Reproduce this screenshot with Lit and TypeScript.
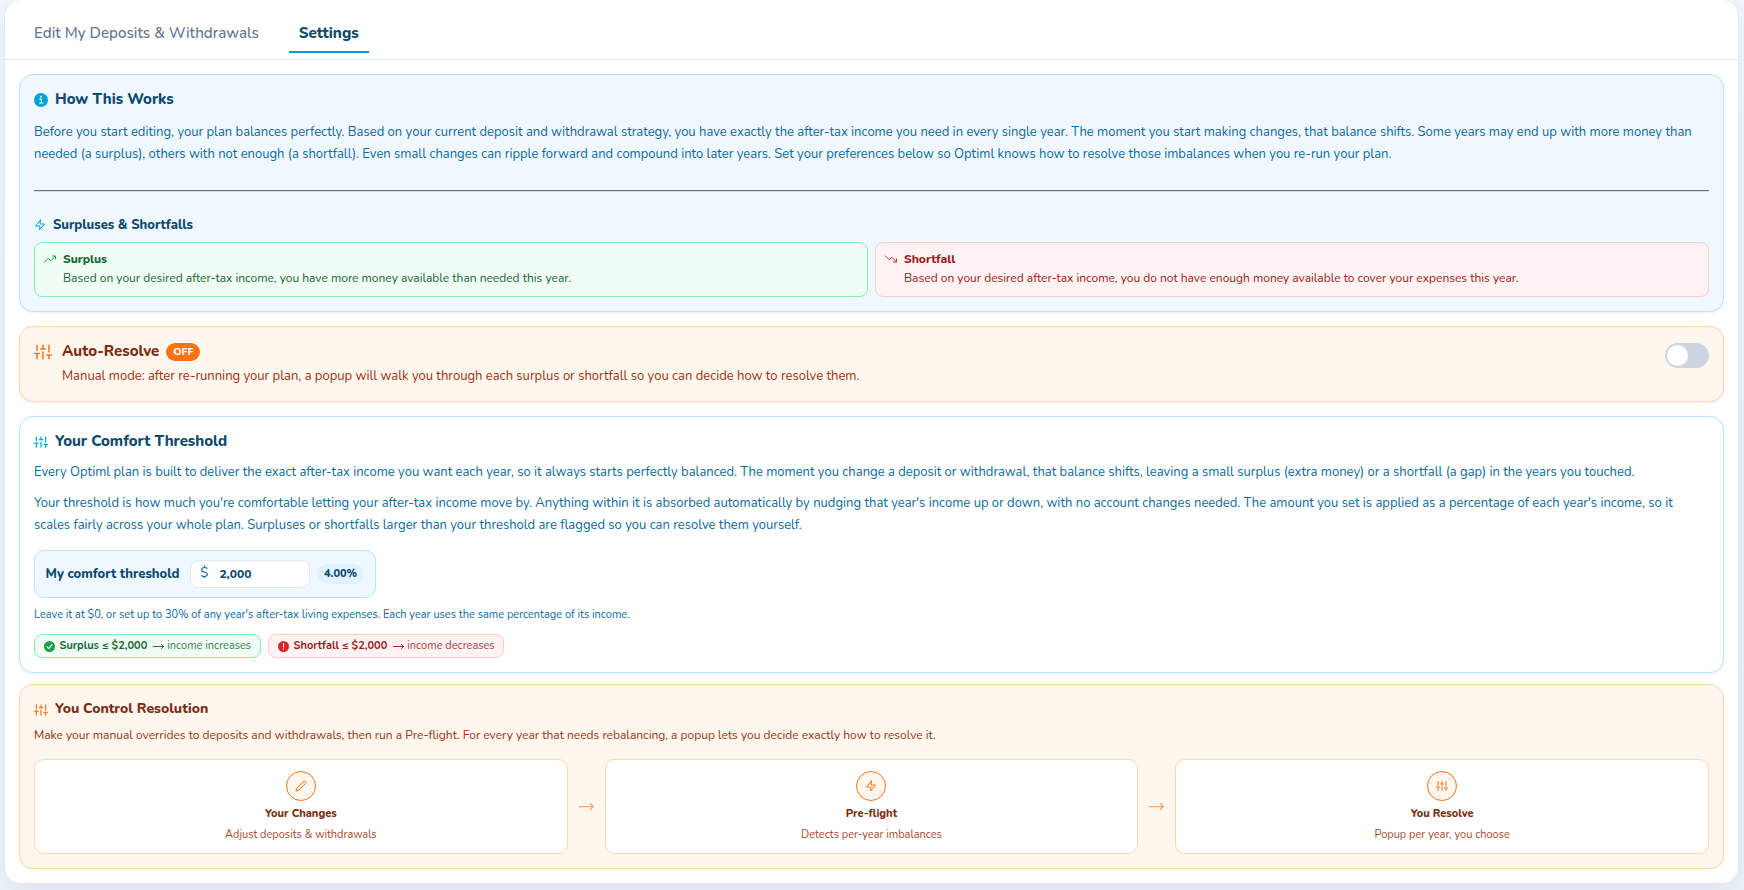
import { LitElement, html, css, svg } from "lit";
import { customElement, property, state } from "lit/decorators.js";

const GLYPHS: Record<string, unknown> = {
  sliders: svg`<path d="M4 21v-7M4 10V3M12 21v-9M12 8V3M20 21v-5M20 12V3M1 14h6M9 8h6M17 16h6" />`,
  zap: svg`<path d="M13 2 3 14h9l-1 8 10-12h-9l1-8z" />`,
  up: svg`<path d="M23 6 13.500 15.500l-5-5L1 18M17 6h6v6" />`,
  down: svg`<path d="M23 18 13.500 8.500l-5 5L1 6M17 18h6v-6" />`,
  pencil: svg`<path d="M17 3a2.830 2.830 0 1 1 4 4L7.500 20.500 2 22l1.500-5.500L17 3z" />`,
  info: svg`<circle cx="12" cy="12" r="12" fill="currentColor" stroke="none" />
    <path d="M10 10.500h2.500v6.500M9.500 17.300h5.500" stroke="#fff" stroke-width="1.800" />
    <circle cx="12" cy="6.300" r="1.500" fill="#fff" stroke="none" />`,
  check: svg`<circle cx="12" cy="12" r="12" fill="currentColor" stroke="none" />
    <path d="M6.500 12.500l4 4 7-8.500" stroke="#fff" stroke-width="2.400" />`,
  alert: svg`<circle cx="12" cy="12" r="12" fill="currentColor" stroke="none" />
    <path d="M12 5.500v7.500M12 16.800v1" stroke="#fff" stroke-width="2.400" />`,
  arrow: svg`<path d="M0.500 12h22.500M18.500 7.500 23 12l-4.500 4.500" />`,
};

@customElement("ui-icon")
class UiIcon extends LitElement {
  @property() name = "zap";
  static styles = css`
    :host { display: block; flex: none; width: 14px; height: 14px; }
    svg { display: block; width: 100%; height: 100%; overflow: visible; }
  `;
  render() {
    return html`<svg viewBox="0 0 24 24" fill="none" stroke="currentColor" stroke-width="2"
      stroke-linecap="round" stroke-linejoin="round">${GLYPHS[this.name]}</svg>`;
  }
}

@customElement("app-root")
class AppRoot extends LitElement {
  @state() private steps = [
    { icon: "pencil", title: "Your Changes", note: "Adjust deposits & withdrawals" },
    { icon: "zap", title: "Pre-flight", note: "Detects per-year imbalances" },
    { icon: "sliders", title: "You Resolve", note: "Popup per year, you choose" },
  ];

  static styles = css`
    :host {
      display: block;
      box-sizing: border-box;
      height: 890px;
      padding: 0 5px 7px 4px;
      overflow: hidden;
      background: linear-gradient(180deg, #f1f7fd 0%, #ecf4fb 50%, #edf3fa 100%);
      font-family: Nunito, Lato, "Noto Sans", sans-serif;
      font-size: 13px;
      color: #0c6a9c;
    }
    * { box-sizing: border-box; }
    p, h2, h3 { margin: 0; }
    h2, h3, .strong { font-weight: 800; }
    b { font-weight: 700; }

    .panel {
      height: 883px;
      background: #fff;
      border-radius: 16px;
      box-shadow: inset 1px 0 #e2e8f0, inset -1px 0 #e2e8f0, 0 8px 24px rgba(15, 50, 90, 0.08);
    }
    .tabs {
      display: flex;
      gap: 20px;
      height: 60px;
      padding: 12px 20px 0;
      border-bottom: 1px solid #dfe7f0;
    }
    .tab {
      height: 41px;
      padding: 0 10px;
      border-bottom: 2px solid transparent;
      font-size: 15.200px;
      font-weight: 500;
      line-height: 42px;
      color: #64748b;
      white-space: nowrap;
    }
    .tab.active { border-color: #00a3d7; color: #0c4a6e; font-weight: 800; }
    .body { padding: 14px 15px 0; }

    .card {
      margin-bottom: 14px;
      padding: 14px;
      border: 1px solid #b9e6fb;
      border-radius: 14px;
      background: #fff;
      box-shadow: 0 1px 3px rgba(15, 50, 90, 0.08);
    }
    .card.sky { background: #f0f8ff; height: 238px; }
    .card.auto { height: 76px; display: flex; gap: 10px; }
    .card.threshold { height: 257px; margin-bottom: 11px; }
    .card.orange { background: #fff6ed; border-color: #fed7aa; color: #9a3412; }

    .heading { display: flex; align-items: center; gap: 7px; height: 20px; color: #00a3d7; }
    .heading h2 { font-size: 15px; line-height: 20px; color: #0c4a6e; }
    .heading ui-icon { position: relative; top: 1px; }
    .orange .heading { color: #f97316; }
    .orange .heading h2 { font-size: 14px; color: #7c2d12; }

    .copy { line-height: 22px; }
    .intro { margin-top: 12px; }
    .first { margin-top: 10px; }
    .second { margin-top: 9px; }

    .rule { height: 1px; margin: 25px 0 24px; border: 0; background: #64748b; box-shadow: 0 1px #bae6fd; }
    .sub { display: flex; align-items: center; gap: 7px; height: 20px; color: #00a3d7; }
    .sub ui-icon { width: 12px; height: 12px; }
    .sub h3 { font-size: 13px; line-height: 20px; color: #0c4a6e; }

    .pair { display: grid; grid-template-columns: 1fr 1fr; gap: 7px; margin-top: 7px; }
    .notice {
      display: flex;
      gap: 7px;
      height: 55px;
      padding: 7px 9px;
      border: 1px solid;
      border-radius: 8px;
      font-size: 12px;
      line-height: 18px;
    }
    .notice ui-icon { width: 12px; height: 12px; margin-top: 3px; }
    .notice h3 { font-size: 12px; line-height: 18px; }
    .notice p { margin-top: 1px; }
    .green { background: #f0fdf4; border-color: #86efac; color: #16a34a; }
    .green p, .green span, .green h3, .green b, .green .go { color: #166534; }
    .red { background: #fef2f2; border-color: #fecaca; color: #dc2626; }
    .red p, .red span, .red h3, .red b, .red .go { color: #991b1b; }

    .auto > ui-icon { width: 18px; height: 18px; margin-top: 2px; color: #f97316; }
    .auto .text { flex: 1; }
    .title { display: flex; gap: 7px; height: 20px; }
    .title h2 { font-size: 15px; line-height: 20px; color: #7c2d12; }
    .badge {
      width: 34px;
      height: 18px;
      margin-top: 2px;
      border-radius: 9px;
      background: #f97316;
      color: #fff;
      font-size: 10.500px;
      line-height: 18px;
      text-align: center;
    }
    .auto p { margin-top: 5px; line-height: 20px; }
    .toggle {
      width: 44px;
      height: 25px;
      margin-top: 2px;
      padding: 2px;
      border-radius: 13px;
      background: #cbd5e1;
    }
    .knob { width: 21px; height: 21px; border-radius: 50%; background: #fff; }

    .field {
      display: flex;
      align-items: center;
      width: 342px;
      height: 48px;
      margin-top: 14px;
      padding: 0 11px 0 10.500px;
      border: 1px solid #b9e6fb;
      border-radius: 10px;
      background: #f0f8ff;
      color: #0c4a6e;
    }
    .label { width: 144.500px; white-space: nowrap; }
    .money {
      display: flex;
      gap: 11px;
      width: 120px;
      height: 28px;
      padding-left: 9px;
      border: 1px solid #dfe9f3;
      border-radius: 8px;
      background: #fff;
      line-height: 26px;
    }
    .money i { font-style: normal; font-size: 14px; line-height: 24px; color: #0c6a9c; }
    .money .strong { font-size: 12px; }
    .percent {
      width: 47px;
      height: 20px;
      margin-left: 7px;
      border-radius: 10px;
      background: #e0f2fe;
      font-size: 11px;
      line-height: 19px;
      text-align: center;
    }
    .hint { margin-top: 8px; font-size: 11px; line-height: 18px; }
    .pills { display: flex; gap: 7px; margin-top: 10px; }
    .pill {
      display: flex;
      align-items: center;
      width: 227px;
      height: 24px;
      padding: 0 0 1px 9px;
      border-width: 1px;
      border-style: solid;
      border-radius: 8px;
      font-size: 11px;
      line-height: 20px;
      white-space: nowrap;
    }
    .pill.red { width: 236px; }
    .pill ui-icon { width: 11px; height: 11px; margin: 1px 4.500px 0 0; }
    .pill b { margin-right: 6px; }
    .pill .go { margin-right: 3px; }
    .pill span { opacity: 0.85; }

    .lead { margin-top: 6px; font-size: 12px; line-height: 20px; }
    .flow {
      display: grid;
      grid-template-columns: 1fr 37px 1fr 37px 1fr;
      align-items: center;
      margin-top: 14px;
    }
    .step {
      display: flex;
      flex-direction: column;
      align-items: center;
      height: 95px;
      padding-top: 11px;
      border: 1px solid #fed7aa;
      border-radius: 10px;
      background: #fff;
    }
    .disc {
      display: grid;
      place-items: center;
      width: 30px;
      height: 30px;
      border: 1px solid #f97316;
      border-radius: 50%;
      background: #fff6ed;
      color: #f97316;
    }
    .disc ui-icon { width: 12px; height: 12px; }
    .step h3 { margin-top: 5px; font-size: 11px; line-height: 16px; color: #7c2d12; }
    .step p { margin-top: 5px; font-size: 11px; line-height: 16px; opacity: 0.9; }
    .flow > ui-icon { width: 15px; height: 15px; justify-self: center; color: #fba56c; }
  `;

  private heading(icon: string, text: string) {
    return html`<div class="heading"><ui-icon name=${icon}></ui-icon><h2>${text}</h2></div>`;
  }

  private notice(tone: string, icon: string, title: string, text: string) {
    return html`<div class="notice ${tone}">
      <ui-icon name=${icon}></ui-icon>
      <div><h3>${title}</h3><p>${text}</p></div>
    </div>`;
  }

  private pill(tone: string, icon: string, title: string, text: string) {
    return html`<div class="pill ${tone}">
      <ui-icon name=${icon}></ui-icon><b>${title}</b><ui-icon class="go" name="arrow"></ui-icon><span>${text}</span>
    </div>`;
  }

  render() {
    return html`<main class="panel">
      <nav class="tabs">
        <div class="tab">Edit My Deposits &amp; Withdrawals</div>
        <div class="tab active">Settings</div>
      </nav>
      <div class="body">
        <section class="card sky">
          ${this.heading("info", "How This Works")}
          <p class="copy intro">Before you start editing, your plan balances perfectly. Based on your current deposit and withdrawal strategy, you have exactly the after-tax income you need in every single year. The moment you start making changes, that balance shifts. Some years may end up with more money than needed (a surplus), others with not enough (a shortfall). Even small changes can ripple forward and compound into later years. Set your preferences below so Optiml knows how to resolve those imbalances when you re-run your plan.</p>
          <hr class="rule" />
          <div class="sub"><ui-icon name="zap"></ui-icon><h3>Surpluses &amp; Shortfalls</h3></div>
          <div class="pair">
            ${this.notice("green", "up", "Surplus", "Based on your desired after-tax income, you have more money available than needed this year.")}
            ${this.notice("red", "down", "Shortfall", "Based on your desired after-tax income, you do not have enough money available to cover your expenses this year.")}
          </div>
        </section>

        <section class="card orange auto">
          <ui-icon name="sliders"></ui-icon>
          <div class="text">
            <div class="title"><h2>Auto-Resolve</h2><div class="badge strong">OFF</div></div>
            <p>Manual mode: after re-running your plan, a popup will walk you through each surplus or shortfall so you can decide how to resolve them.</p>
          </div>
          <div class="toggle" role="switch" aria-checked="false"><div class="knob"></div></div>
        </section>

        <section class="card threshold">
          ${this.heading("sliders", "Your Comfort Threshold")}
          <p class="copy first">Every Optiml plan is built to deliver the exact after-tax income you want each year, so it always starts perfectly balanced. The moment you change a deposit or withdrawal, that balance shifts, leaving a small surplus (extra money) or a shortfall (a gap) in the years you touched.</p>
          <p class="copy second">Your threshold is how much you're comfortable letting your after-tax income move by. Anything within it is absorbed automatically by nudging that year's income up or down, with no account changes needed. The amount you set is applied as a percentage of each year's income, so it scales fairly across your whole plan. Surpluses or shortfalls larger than your threshold are flagged so you can resolve them yourself.</p>
          <div class="field">
            <div class="label strong">My comfort threshold</div>
            <div class="money"><i>$</i><span class="strong">2,000</span></div>
            <div class="percent strong">4.00%</div>
          </div>
          <p class="hint">Leave it at $0, or set up to 30% of any year's after-tax living expenses. Each year uses the same percentage of its income.</p>
          <div class="pills">
            ${this.pill("green", "check", "Surplus ≤ $2,000", "income increases")}
            ${this.pill("red", "alert", "Shortfall ≤ $2,000", "income decreases")}
          </div>
        </section>

        <section class="card orange">
          ${this.heading("sliders", "You Control Resolution")}
          <p class="lead">Make your manual overrides to deposits and withdrawals, then run a Pre-flight. For every year that needs rebalancing, a popup lets you decide exactly how to resolve it.</p>
          <div class="flow">
            ${this.steps.map((s, i) => html`
              ${i ? html`<ui-icon name="arrow"></ui-icon>` : null}
              <div class="step">
                <div class="disc"><ui-icon name=${s.icon}></ui-icon></div>
                <h3>${s.title}</h3>
                <p>${s.note}</p>
              </div>`)}
          </div>
        </section>
      </div>
    </main>`;
  }
}
